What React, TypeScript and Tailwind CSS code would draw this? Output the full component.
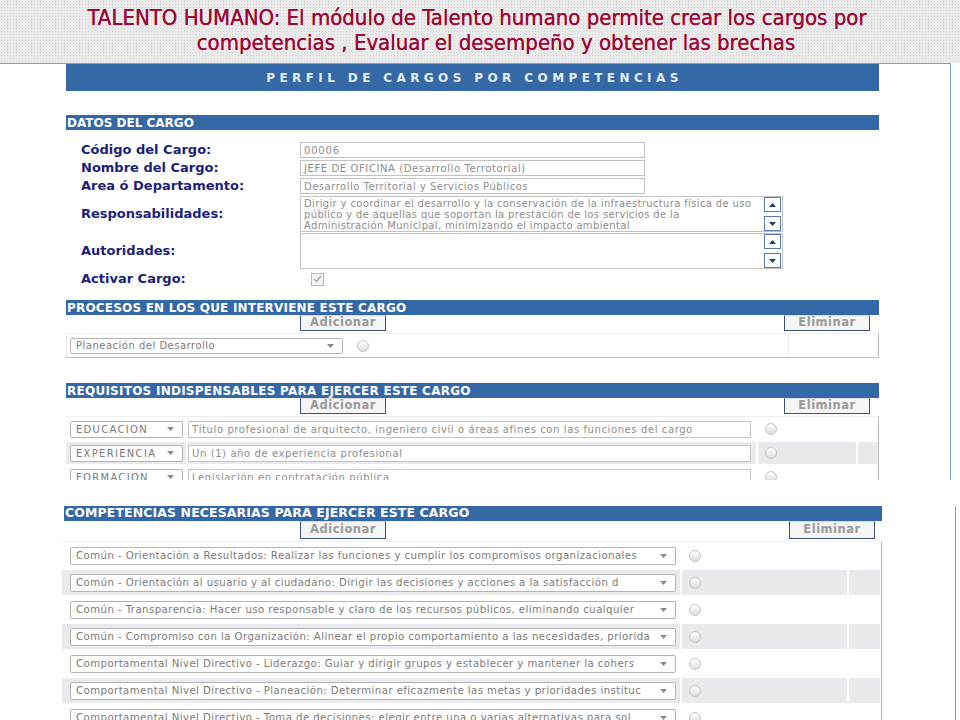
import React from 'react';

const SANS = "font-['DejaVu_Sans',Verdana,sans-serif]";

const Arrow = () => (
  <svg width="7" height="4" viewBox="0 0 7 4" className="shrink-0">
    <path d="M0 0h7L3.5 4z" fill="#8a8a8a" />
  </svg>
);

const Select = ({ text, className = '' }: { text: string; className?: string }) => (
  <div
    className={`flex items-center justify-between rounded-[2px] border border-[#b3b3b3] bg-white pl-[5px] pr-[8px] text-[#7a7a7a] ${className}`}
  >
    <span className="truncate">{text}</span>
    <Arrow />
  </div>
);

const Radio = () => (
  <span className="block h-[12px] w-[12px] rounded-full border border-[#c4c4c4] bg-gradient-to-b from-white to-[#dedede]" />
);

const Bar = ({ children, className = '' }: { children: React.ReactNode; className?: string }) => (
  <div className={`flex h-[15px] items-center bg-[#3568a6] pl-[1px] font-bold leading-none text-white ${className}`}>
    {children}
  </div>
);

const Btn = ({ label, className = '' }: { label: string; className?: string }) => (
  <div
    className={`flex items-center justify-center border border-[#3d5275] border-t-[#d8d8d8] bg-[#f5f5f5] text-[11.5px] font-bold tracking-[0.5px] text-[#9a9a9a] ${className}`}
  >
    {label}
  </div>
);

const ScrollBtn = ({ up }: { up?: boolean }) => (
  <div className="flex h-[15px] w-[17px] items-center justify-center border border-[#5a7bb0] bg-white">
    <svg width="7" height="4" viewBox="0 0 7 4">
      <path d={up ? 'M0 4h7L3.5 0z' : 'M0 0h7L3.5 4z'} fill="#1f3c78" />
    </svg>
  </div>
);

const Label = ({ children }: { children: React.ReactNode }) => (
  <div className="w-[234px] shrink-0 pl-[15px] text-[13px] font-bold text-[#1b1f78]">{children}</div>
);

const TextField = ({ value, className = '' }: { value?: string; className?: string }) => (
  <div
    className={`flex items-center overflow-hidden whitespace-nowrap border border-[#c2c2c2] bg-white pl-[3px] text-[10px] text-[#8d8d8d] ${className}`}
  >
    {value}
  </div>
);

const requisitos = [
  ['EDUCACION', 'Título profesional de arquitecto, ingeniero civil o áreas afines con las funciones del cargo'],
  ['EXPERIENCIA', 'Un (1) año de experiencia profesional'],
  ['FORMACION', 'Legislación en contratación pública'],
];

const competencias = [
  'Común - Orientación a Resultados: Realizar las funciones y cumplir los compromisos organizacionales',
  'Común - Orientación al usuario y al ciudadano: Dirigir las decisiones y acciones a la satisfacción d',
  'Común - Transparencia: Hacer uso responsable y claro de los recursos públicos, eliminando cualquier',
  'Común - Compromiso con la Organización: Alinear el propio comportamiento a las necesidades, priorida',
  'Comportamental Nivel Directivo - Liderazgo: Guiar y dirigir grupos y establecer y mantener la cohers',
  'Comportamental Nivel Directivo - Planeación: Determinar eficazmente las metas y prioridades instituc',
  'Comportamental Nivel Directivo - Toma de decisiones: elegir entre una o varias alternativas para sol',
];

export default function App() {
  return (
    <div className={`relative h-[720px] w-[960px] overflow-hidden bg-white ${SANS}`}>
      {/* slide title */}
      <div className="h-[63px] bg-[#ebebeb] bg-[radial-gradient(#d2d2d2_0.8px,transparent_0.8px)] bg-[length:3px_3px] pt-[5px] font-['DejaVu_Sans_Condensed','DejaVu_Sans',sans-serif] text-[22px] leading-[25px] text-[#9c0833] [text-shadow:0_0_0.4px_#9c0833]">
        <div className="pr-[6px] text-center">
          TALENTO HUMANO: El módulo de Talento humano permite crear los cargos por
        </div>
        <div className="pl-[32px] text-center">competencias , Evaluar el desempeño y obtener las brechas</div>
      </div>

      {/* first capture */}
      <div className="h-[417px] w-[951px] overflow-hidden border-t border-r border-[#7f9fc4] pl-[66px]">
        <div className="w-[813px]">
          <div className="flex h-[27px] items-center justify-center bg-[#3568a6] pl-[4px] text-[12px] font-bold tracking-[4.4px] text-[#e6ecf4]">
            PERFIL DE CARGOS POR COMPETENCIAS
          </div>

          <Bar className="mt-[24px] text-[12px]">DATOS DEL CARGO</Bar>

          <div className="mt-[12px] flex flex-col">
            <div className="flex h-[16px] items-center">
              <Label>Código del Cargo:</Label>
              <TextField value="00006" className="h-[16px] w-[345px] tracking-[0.8px]" />
            </div>
            <div className="mt-[2px] flex h-[16px] items-center">
              <Label>Nombre del Cargo:</Label>
              <TextField value="JEFE DE OFICINA (Desarrollo Terrotorial)" className="h-[16px] w-[345px] tracking-[0.6px]" />
            </div>
            <div className="mt-[2px] flex h-[16px] items-center">
              <Label>Area ó Departamento:</Label>
              <TextField value="Desarrollo Territorial y Servicios Públicos" className="h-[16px] w-[345px] tracking-[0.5px]" />
            </div>
            <div className="mt-[2px] flex h-[36px] items-center">
              <Label>Responsabilidades:</Label>
              <div className="flex h-[36px] w-[483px] border border-[#c2c2c2] bg-white">
                <div className="flex-1 whitespace-nowrap pl-[3px] pt-[1px] text-[10px] leading-[11px] tracking-[0.35px] text-[#8d8d8d]">
                  Dirigir y coordinar el desarrollo y la conservación de la infraestructura física de uso
                  <br />
                  público y de aquellas que soportan la prestación de los servicios de la
                  <br />
                  Administración Municipal, minimizando el impacto ambiental
                </div>
                <div className="flex flex-col justify-between pr-[1px]">
                  <ScrollBtn up />
                  <ScrollBtn />
                </div>
              </div>
            </div>
            <div className="mt-[1px] flex h-[36px] items-center">
              <Label>Autoridades:</Label>
              <div className="flex h-[36px] w-[483px] border border-[#c2c2c2] bg-white">
                <div className="flex-1" />
                <div className="flex flex-col justify-between pr-[1px]">
                  <ScrollBtn up />
                  <ScrollBtn />
                </div>
              </div>
            </div>
            <div className="mt-[3px] flex h-[14px] items-center">
              <Label>Activar Cargo:</Label>
              <div className="ml-[11px] flex h-[13px] w-[13px] items-center justify-center border border-[#b8b8b8] bg-[#f4f4f4]">
                <svg width="9" height="8" viewBox="0 0 9 8">
                  <path d="M1 4l2.5 2.5L8 1" stroke="#a8a8a8" strokeWidth="1.4" fill="none" />
                </svg>
              </div>
            </div>
          </div>

          <Bar className="mt-[14px] text-[12px] tracking-[0.2px]">PROCESOS EN LOS QUE INTERVIENE ESTE CARGO</Bar>
          <div className="flex h-[16px]">
            <Btn label="Adicionar" className="ml-[234px] w-[86px]" />
            <Btn label="Eliminar" className="ml-[398px] w-[86px]" />
          </div>
          <div className="mt-[2px] flex h-[25px] border-b border-r border-l border-[#bdbdbd] border-l-[#e6e6e6] border-t border-t-[#f0f0f0]">
            <div className="flex w-[283px] items-center pl-[3px]">
              <Select text="Planeación del Desarrollo" className="h-[16px] w-[273px] text-[10px] tracking-[0.5px]" />
            </div>
            <div className="flex w-[438px] items-center pl-[7px]">
              <Radio />
            </div>
            <div className="flex-1 border-l border-[#ececec]" />
          </div>

          <Bar className="mt-[25px] text-[12px] tracking-[0.25px]">REQUISITOS INDISPENSABLES PARA EJERCER ESTE CARGO</Bar>
          <div className="flex h-[16px]">
            <Btn label="Adicionar" className="ml-[234px] w-[86px]" />
            <Btn label="Eliminar" className="ml-[398px] w-[86px]" />
          </div>
          <div className="mt-[2px] flex flex-col gap-[2px] border-r border-t border-[#bdbdbd] border-t-[#eeeeee] pt-[1px]">
            {requisitos.map(([tipo, texto], i) => {
              const bg = i % 2 === 1 ? 'bg-[#e8eaed]' : 'bg-white';
              return (
                <div key={tipo} className="flex h-[22px] gap-[2px]">
                  <div className={`flex w-[120px] items-center pl-[4px] ${bg}`}>
                    <Select text={tipo} className="h-[17px] w-[113px] text-[10px] tracking-[1.3px]" />
                  </div>
                  <div className={`flex w-[568px] items-center ${bg}`}>
                    <TextField value={texto} className="h-[17px] w-[563px] tracking-[0.6px]" />
                  </div>
                  <div className={`flex w-[98px] items-center pl-[7px] ${bg}`}>
                    <Radio />
                  </div>
                  <div className={`w-[20px] ${bg}`} />
                </div>
              );
            })}
          </div>
        </div>
      </div>

      {/* second capture */}
      <div className="h-[240px] w-[956px] border-r border-[#7f9fc4] pl-[64px]">
        <div className="w-[818px]">
          <Bar className="mt-[26px] text-[12.5px] tracking-[0.1px]">COMPETENCIAS NECESARIAS PARA EJERCER ESTE CARGO</Bar>
          <div className="flex h-[18px]">
            <Btn label="Adicionar" className="ml-[236px] w-[86px]" />
            <Btn label="Eliminar" className="ml-[403px] w-[86px]" />
          </div>
          <div className="-ml-[2px] mt-[2px] flex w-[820px] flex-col gap-[2px] border-r border-t border-[#bdbdbd] border-t-[#eeeeee] pt-[1px]">
            {competencias.map((c, i) => {
              const bg = i % 2 === 1 ? 'bg-[#e8eaed]' : 'bg-white';
              return (
                <div key={c} className="flex h-[25px] gap-[2px]">
                  <div className={`flex w-[618px] items-center pl-[8px] ${bg}`}>
                    <Select text={c} className="h-[18px] w-[606px] text-[10.2px] tracking-[0.42px]" />
                  </div>
                  <div className={`flex w-[165px] items-center pl-[7px] ${bg}`}>
                    <Radio />
                  </div>
                  <div className={`w-[31px] ${bg}`} />
                </div>
              );
            })}
          </div>
        </div>
      </div>
    </div>
  );
}
